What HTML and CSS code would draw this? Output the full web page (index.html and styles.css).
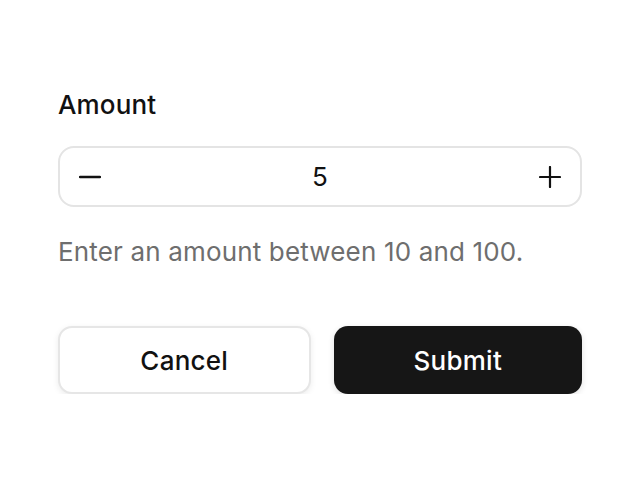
FILE: index.html
```html
<!DOCTYPE html>
<html lang="en">
<head>
<meta charset="UTF-8">
<meta name="viewport" content="width=device-width, initial-scale=1.0">
<title>Amount</title>
<link rel="stylesheet" href="styles.css">
</head>
<body>

<div class="form">
    <label class="label" for="amount">Amount</label>
    <div class="stepper">
        <button class="step" aria-label="Decrease">
            <svg width="22" height="22" viewBox="0 0 22 22"><path d="M1 11h20" stroke="#111" stroke-width="2.4" stroke-linecap="round"/></svg>
        </button>
        <div class="value" id="amount">5</div>
        <button class="step" aria-label="Increase">
            <svg width="22" height="22" viewBox="0 0 22 22"><path d="M1 11h20M11 1v20" stroke="#111" stroke-width="2.2" stroke-linecap="round"/></svg>
        </button>
    </div>
    <p class="hint">Enter an amount between 10 and 100.</p>
    <div class="actions">
        <button class="btn btn-cancel">Cancel</button>
        <button class="btn btn-submit">Submit</button>
    </div>
</div>

</body>
</html>
```

FILE: styles.css
```css
body {
    font-family: Inter, "Noto Sans", sans-serif;
    background-color: #ffffff;
    color: #111111;
    margin: 0;
    padding: 0;
    letter-spacing: 0.01em;
}
.form {
    padding: 89px 58px 0 58px;
    display: flex;
    flex-direction: column;
}
.label {
    font-size: 26px;
    font-weight: 500;
    line-height: 32px;
    margin-bottom: 25px;
}
.stepper {
    height: 61px;
    box-sizing: border-box;
    border: 2px solid #e4e4e4;
    border-radius: 16px;
    display: flex;
    align-items: center;
    justify-content: space-between;
    padding: 0 8px;
}
.step {
    background: none;
    border: none;
    width: 44px;
    height: 44px;
    display: flex;
    align-items: center;
    justify-content: center;
    padding: 0;
    cursor: pointer;
}
.value {
    font-size: 26px;
    font-weight: 400;
}
.hint {
    font-size: 26px;
    color: #6e6e6e;
    margin: 29px 0 0 0;
    line-height: 32px;
}
.actions {
    display: flex;
    gap: 23px;
    margin-top: 58px;
}
.btn {
    flex: 1;
    height: 68px;
    border-radius: 14px;
    font-family: Inter, "Noto Sans", sans-serif;
    font-size: 26px;
    font-weight: 500;
    letter-spacing: 0.01em;
    cursor: pointer;
}
.btn-cancel {
    background-color: #ffffff;
    color: #111111;
    border: 2px solid #e6e6e6;
    box-shadow: 0 2px 6px rgba(0, 0, 0, 0.08);
}
.btn-submit {
    background-color: #161616;
    color: #ffffff;
    border: none;
    box-shadow: 0 2px 6px rgba(0, 0, 0, 0.12);
}
```
